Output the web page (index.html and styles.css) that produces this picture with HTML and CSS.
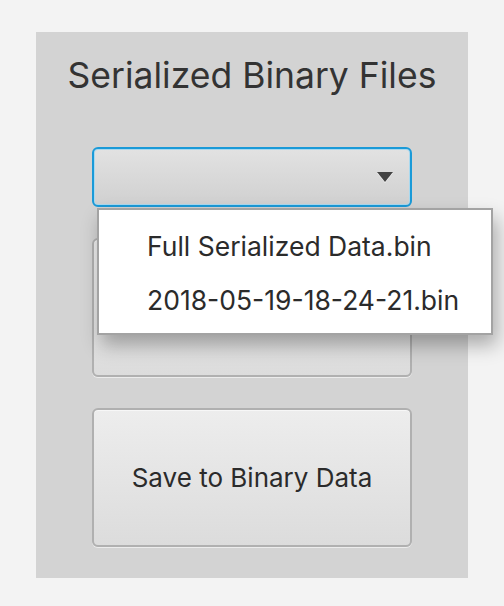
FILE: index.html
```html
<!DOCTYPE html>
<html>
<head>
<meta charset="utf-8">
<link rel="stylesheet" href="styles.css">
</head>
<body>
<div class="panel">
  <h1 class="title">Serialized Binary Files</h1>
  <div class="combo-wrap">
    <div class="combo">
      <span class="arrow"></span>
    </div>
    <ul class="popup">
      <li>Full Serialized Data.bin</li>
      <li>2018-05-19-18-24-21.bin</li>
    </ul>
  </div>
  <button class="btn"></button>
  <button class="btn">Save to Binary Data</button>
</div>
</body>
</html>
```
FILE: styles.css
```css
html, body {
  margin: 0;
  padding: 0;
  background: #f3f3f3;
  font-family: Inter, "Liberation Sans", sans-serif;
  color: #333;
}
.panel {
  margin: 32px 0 0 36px;
  width: 432px;
  height: 546px;
  background: #d3d3d3;
  display: flex;
  flex-direction: column;
  align-items: center;
  box-sizing: border-box;
  padding-top: 20px;
}
.title {
  margin: 0;
  font-weight: 400;
  font-size: 35.5px;
  line-height: 48px;
  color: #333;
}
.combo-wrap {
  position: relative;
  margin-top: 47px;
  width: 320px;
  height: 60px;
}
.combo {
  box-sizing: border-box;
  width: 320px;
  height: 60px;
  border: 2px solid #1a9ad8;
  border-radius: 6px;
  box-shadow: inset 0 0 0 1px #a9d9ef;
  background: linear-gradient(#e2e2e2, #d0d0d0);
  display: flex;
  align-items: center;
  justify-content: flex-end;
  padding-right: 17px;
}
.arrow {
  width: 0;
  height: 0;
  border-left: 8px solid transparent;
  border-right: 8px solid transparent;
  border-top: 10px solid #444;
  filter: drop-shadow(0 1px 0 #f4f4f4);
}
.popup {
  position: absolute;
  left: 5px;
  top: 61px;
  width: 396px;
  height: 127px;
  box-sizing: border-box;
  margin: 0;
  padding: 9px 0 0 48px;
  list-style: none;
  background: #fff;
  border: 2px solid #a3a3a3;
  box-shadow: 4px 10px 18px rgba(0,0,0,0.3);
  z-index: 2;
}
.popup li {
  font-size: 26.5px;
  line-height: 54px;
  height: 54px;
  color: #2b2b2b;
}
.btn {
  box-sizing: border-box;
  width: 320px;
  height: 139px;
  margin-top: 31px;
  border: 2px solid #b0b0b0;
  border-radius: 6px;
  background: linear-gradient(#ededed, #dcdcdc);
  box-shadow: 0 1px 0 #ececec, inset 0 1px 0 #f7f7f7;
  font-family: inherit;
  font-size: 26px;
  color: #2b2b2b;
  padding: 0;
}
```
